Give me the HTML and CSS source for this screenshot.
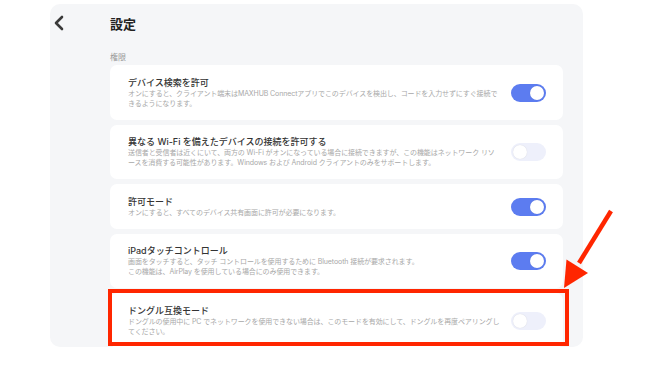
FILE: index.html
```html
<!DOCTYPE html>
<html lang="ja">
<head>
    <meta charset="UTF-8">
    <meta name="viewport" content="width=device-width, initial-scale=1.0">
    <title>設定</title>
    <link rel="stylesheet" href="styles.css">
</head>
<body>
    <div class="page">
        <div class="panel">
            <div class="back">
                <svg width="14" height="16" viewBox="0 0 14 16">
                    <path d="M10 2 L4 8 L10 14" fill="none" stroke="#3a3a3a" stroke-width="2.6" stroke-linecap="round" stroke-linejoin="round"/>
                </svg>
            </div>
            <div class="main">
                <h1>設定</h1>
                <div class="section-label">権限</div>

                <div class="card">
                    <div class="card-text">
                        <div class="card-title">デバイス検索を許可</div>
                        <div class="card-desc">オンにすると、クライアント端末はMAXHUB Connectアプリでこのデバイスを検出し、コードを入力せずにすぐ接続できるようになります。</div>
                    </div>
                    <div class="toggle on"></div>
                </div>

                <div class="card">
                    <div class="card-text">
                        <div class="card-title">異なる Wi-Fi を備えたデバイスの接続を許可する</div>
                        <div class="card-desc">送信者と受信者は近くにいて、両方の Wi-Fi がオンになっている場合に接続できますが、この機能はネットワーク リソースを消費する可能性があります。Windows および Android クライアントのみをサポートします。</div>
                    </div>
                    <div class="toggle"></div>
                </div>

                <div class="card">
                    <div class="card-text">
                        <div class="card-title">許可モード</div>
                        <div class="card-desc">オンにすると、すべてのデバイス共有画面に許可が必要になります。</div>
                    </div>
                    <div class="toggle on"></div>
                </div>

                <div class="card">
                    <div class="card-text">
                        <div class="card-title">iPadタッチコントロール</div>
                        <div class="card-desc">画面をタッチすると、タッチ コントロールを使用するために Bluetooth 接続が要求されます。<br>この機能は、AirPlay を使用している場合にのみ使用できます。</div>
                    </div>
                    <div class="toggle on"></div>
                </div>

                <div class="card">
                    <div class="card-text">
                        <div class="card-title">ドングル互換モード</div>
                        <div class="card-desc">ドングルの使用中に PC でネットワークを使用できない場合は、このモードを有効にして、ドングルを再度ペアリングしてください。</div>
                    </div>
                    <div class="toggle"></div>
                </div>
            </div>
        </div>

        <!-- annotation overlay -->
        <div class="highlight"></div>
        <svg class="arrow" width="666" height="365" viewBox="0 0 666 365">
            <line x1="611" y1="211" x2="579" y2="263" stroke="#ff2600" stroke-width="4.5"/>
            <polygon points="564,288 566.5,259.5 588,273" fill="#ff2600"/>
        </svg>
    </div>
</body>
</html>
```

FILE: styles.css
```css
body {
    margin: 0;
    background-color: #fff;
    font-family: "Noto Sans CJK JP", "Noto Sans", sans-serif;
    color: #333;
}
.page {
    position: relative;
    width: 666px;
    height: 365px;
    overflow: hidden;
}
.panel {
    display: flex;
    margin: 4px 0 0 50px;
    width: 533px;
    height: 343px;
    background-color: #f5f6f8;
    border-radius: 10px;
    overflow: hidden;
}
.back {
    width: 60px;
    flex: 0 0 60px;
    padding: 8px 0 0 2px;
    box-sizing: border-box;
}
.main {
    flex: 1;
    padding: 11px 20px 0 0;
}
h1 {
    margin: 0;
    font-size: 13px;
    line-height: 18px;
    font-weight: 700;
    color: #222;
}
.section-label {
    margin-top: 18px;
    font-size: 8px;
    line-height: 11px;
    color: #9a9a9a;
}
.card {
    display: flex;
    align-items: center;
    margin-top: 5px;
    padding: 11.5px 17px 11px 18px;
    background-color: #fff;
    border-radius: 7px;
}
.section-label + .card {
    margin-top: 3px;
}
.card-text {
    flex: 0 0 373px;
}
.card-title {
    font-family: Inter, "Noto Sans CJK JP", sans-serif;
    font-size: 9px;
    line-height: 12px;
    font-weight: 500;
    color: #333;
}
.card-desc {
    font-family: Inter, "Noto Sans CJK JP", sans-serif;
    font-size: 7px;
    line-height: 10px;
    letter-spacing: -0.1px;
    color: #a8a8a8;
}
.toggle {
    position: relative;
    margin-left: auto;
    width: 35px;
    height: 18px;
    border-radius: 9px;
    background-color: #eef0fb;
}
.toggle::after {
    content: "";
    position: absolute;
    top: 2px;
    left: 2px;
    width: 14px;
    height: 14px;
    border-radius: 50%;
    background-color: #fff;
    box-shadow: 0 0 1px rgba(0, 0, 0, 0.15);
}
.toggle.on {
    background-color: #5c7cf0;
}
.toggle.on::after {
    left: 19px;
}
.highlight {
    position: absolute;
    left: 108px;
    top: 289px;
    width: 453px;
    height: 49px;
    border: 4px solid #ff2600;
}
.arrow {
    position: absolute;
    left: 0;
    top: 0;
}
```
